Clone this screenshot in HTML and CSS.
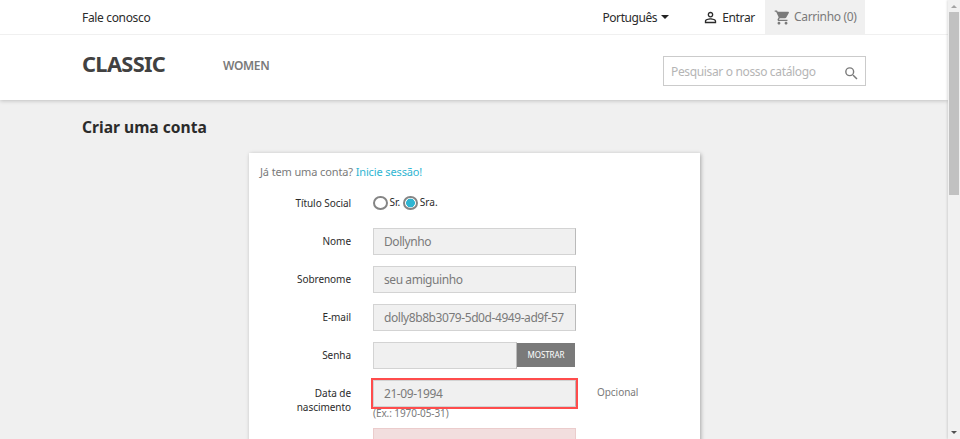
FILE: index.html
```html
<!DOCTYPE html>
<html lang="pt">
<head>
<meta charset="utf-8">
<title>Criar uma conta</title>
<link rel="stylesheet" href="styles.css">
</head>
<body>
<div class="window">
  <div class="page">
    <header class="header">
      <nav class="topbar">
        <a class="contact">Fale conosco</a>
        <div class="language"><span>Português</span><i class="caret"></i></div>
        <a class="login">
          <svg width="17" height="17" viewBox="0 0 24 24"><path fill="currentColor" d="M12 5.9a2.1 2.1 0 1 1 0 4.2 2.1 2.1 0 0 1 0-4.2m0 9c2.97 0 6.1 1.46 6.1 2.1v1.1H5.9V17c0-.64 3.13-2.1 6.1-2.1M12 4C9.79 4 8 5.79 8 8s1.79 4 4 4 4-1.79 4-4-1.79-4-4-4zm0 9c-2.67 0-8 1.34-8 4v3h16v-3c0-2.66-5.33-4-8-4z"/></svg>
          <span>Entrar</span>
        </a>
        <a class="cart">
          <svg width="17" height="17" viewBox="0 0 24 24"><path fill="currentColor" d="M7 18c-1.1 0-1.99.9-1.99 2S5.9 22 7 22s2-.9 2-2-.9-2-2-2zM1 2v2h2l3.6 7.59-1.35 2.45c-.16.28-.25.61-.25.96 0 1.1.9 2 2 2h12v-2H7.42c-.14 0-.25-.11-.25-.25l.03-.12.9-1.63h7.45c.75 0 1.41-.41 1.75-1.03l3.58-6.49A1 1 0 0 0 20 4H5.21l-.94-2H1zm16 16c-1.1 0-1.99.9-1.99 2s.89 2 1.99 2 2-.9 2-2-.9-2-2-2z"/></svg>
          <span>Carrinho (0)</span>
        </a>
      </nav>
      <div class="mainbar">
        <a class="logo">CLASSIC</a>
        <a class="menu">WOMEN</a>
        <div class="search">
          <span>Pesquisar o nosso catálogo</span>
          <svg width="17" height="17" viewBox="0 0 24 24"><path fill="currentColor" d="M15.5 14h-.79l-.28-.27A6.47 6.47 0 0 0 16 9.5 6.5 6.5 0 1 0 9.5 16c1.61 0 3.09-.59 4.23-1.57l.27.28v.79l5 4.99L20.49 19l-4.99-5zm-6 0a4.5 4.5 0 1 1 0-9 4.5 4.5 0 0 1 0 9z"/></svg>
        </div>
      </div>
    </header>
    <main class="content">
      <h1>Criar uma conta</h1>
      <section class="card">
        <p class="signin">Já tem uma conta? <a>Inicie sessão!</a></p>
        <div class="row">
          <span class="label">Título Social</span>
          <div class="radios"><i class="radio"></i><span>Sr.</span><i class="radio checked"></i><span>Sra.</span></div>
        </div>
        <div class="row"><span class="label">Nome</span><div class="input">Dollynho</div></div>
        <div class="row"><span class="label">Sobrenome</span><div class="input">seu amiguinho</div></div>
        <div class="row"><span class="label">E-mail</span><div class="input">dolly8b8b3079-5d0d-4949-ad9f-57</div></div>
        <div class="row"><span class="label">Senha</span><div class="input password"></div><span class="show">MOSTRAR</span></div>
        <div class="row birthday">
          <span class="label">Data de<br>nascimento</span>
          <div class="field"><div class="input focused">21-09-1994</div><span class="hint">(Ex.: 1970-05-31)</span></div>
          <span class="optional">Opcional</span>
        </div>
        <div class="alert"></div>
      </section>
    </main>
  </div>
  <aside class="scrollbar"><i class="arrow up"></i><i class="thumb"></i><i class="arrow down"></i></aside>
</div>
</body>
</html>
```
FILE: styles.css
```css
* { box-sizing: border-box; }
body { margin: 0; font-family: "Noto Sans", sans-serif; font-size: 11.3px; color: #2b2b2b; }
.window { display: flex; height: 439px; overflow: hidden; background: #f0f0f0; }
.page { width: 948px; height: 439px; overflow: hidden; }
svg { display: block; flex: none; }

.header { height: 100px; background: #fff; box-shadow: 0 1px 4px rgba(0,0,0,.2); }
.topbar { display: flex; align-items: center; height: 35px; padding: 0 83px 0 82px; border-bottom: 1px solid #f0f0f0; font-size: 12px; letter-spacing: -.34px; }
.contact { margin-right: auto; }
.language { display: flex; align-items: center; gap: 4px; margin-right: 33px; letter-spacing: -.42px; }
.caret { border: 4px solid transparent; border-top-color: #232323; border-bottom: 0; }
.login { display: flex; align-items: center; gap: 3px; margin-right: 10px; }
.cart { display: flex; align-items: center; gap: 3px; width: 100px; height: 34px; padding-left: 9px; background: #f0f0f0; color: #7a7a7a; }
.cart span { margin-top: -1px; }
.mainbar { display: flex; height: 65px; padding: 0 82px; }
.logo { width: 141px; padding-top: 14px; font-size: 21.8px; line-height: 30px; font-weight: 700; letter-spacing: -.65px; color: #414141; }
.menu { padding-top: 21px; font-size: 12px; font-weight: 600; line-height: 20px; letter-spacing: -.35px; color: #7a7a7a; }
.search { display: flex; align-items: center; justify-content: space-between; width: 203px; height: 30px; margin: 21px 0 0 auto; padding: 0 5px 0 7px; border: 1px solid #cbcbcb; font-size: 12px; letter-spacing: -.35px; color: #b5b5b5; }
.search svg { margin-top: 4px; color: #7a7a7a; }

.content { padding-top: 17px; }
h1 { margin: 0 0 16px 82px; font-size: 15.6px; line-height: 20px; font-weight: 700; }
.card { width: 451px; height: 320px; margin-left: 249px; padding: 11px 10px 0 11px; background: #fff; box-shadow: 1px 1px 4px rgba(0,0,0,.3); }
.signin { margin: 0 0 14px; font-size: 11px; line-height: 16px; letter-spacing: -.13px; color: #7a7a7a; }
.signin a { color: #2fb5d2; }
.row { display: flex; height: 38px; }
.label { width: 91px; margin-right: 22px; padding-top: 2px; text-align: right; font-size: 10px; line-height: 14px; letter-spacing: -.05px; }
.radios { display: flex; align-items: center; height: 18px; font-size: 10.1px; }
.radios span { margin: 0 3px 2px 2px; }
.radio { width: 14.5px; height: 14px; border: 2px solid #858585; border-radius: 50%; background: #fff; }
.checked { background: radial-gradient(circle, #2fb5d2 0 4.1px, #fff 4.7px); }
.input { width: 203px; height: 27px; margin-top: -4px; padding-left: 10px; border: 1px solid #d3d3d3; border-right-color: #bababa; background: #f0f0f0; color: #7a7a7a; font-size: 12px; letter-spacing: -.43px; line-height: 25px; white-space: nowrap; overflow: hidden; }
.password { width: 144px; }
.show { width: 58px; height: 24px; margin-top: -3px; background: #7a7a7a; color: #fff; font-size: 8px; letter-spacing: -.07px; line-height: 24px; text-align: center; }
.focused { outline: 2px solid #ff4c4c; }
.hint { display: block; margin-top: -1px; font-size: 10px; line-height: 14px; letter-spacing: -.08px; color: #7a7a7a; }
.optional { margin-left: 21px; padding-top: 1px; font-size: 10px; line-height: 14px; letter-spacing: -.05px; color: #7a7a7a; }
.birthday { height: 44px; }
.alert { width: 203px; height: 30px; margin: 0 0 0 113px; border: 1px solid #ebcccc; background: #f2dede; }

.scrollbar { display: flex; flex-direction: column; align-items: center; width: 12px; padding: 5px 0; background: #f1f1f1; box-shadow: -1px 0 2px rgba(0,0,0,.12); }
.arrow { border: 3px solid transparent; }
.up { border-top: 0; border-bottom-color: #a3a3a3; }
.down { margin-top: auto; border-bottom: 0; border-top-color: #505050; }
.thumb { width: 10px; height: 183px; margin-top: 4px; background: #c1c1c1; }
```
